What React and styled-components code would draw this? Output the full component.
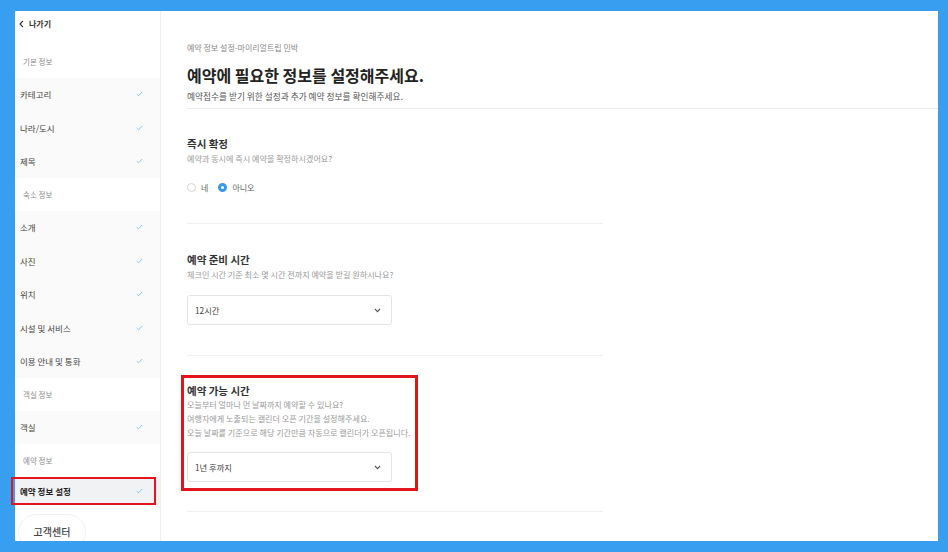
import styled, { createGlobalStyle } from "styled-components";

const GlobalStyle = createGlobalStyle`
  html, body {
    margin: 0;
    padding: 0;
    background: #389ef0;
  }
  body {
    font-family: "Noto Sans CJK KR", "Noto Sans", sans-serif;
    color: #333;
  }
  * {
    box-sizing: border-box;
  }
`;

const Frame = styled.div`
  width: 948px;
  height: 552px;
  padding: 11px 10px 11px 15px;
  background: #389ef0;
`;

const Window = styled.div`
  display: flex;
  height: 530px;
  background: #fff;
`;

const Sidebar = styled.aside`
  width: 146px;
  flex-shrink: 0;
  border-right: 1px solid #efefef;
  display: flex;
  flex-direction: column;
`;

const BackRow = styled.div`
  height: 34px;
  padding: 6px 0 0 4px;
  display: flex;
  align-items: flex-start;
  gap: 5px;
  font-size: 8px;
  font-weight: 700;
  line-height: 14px;
  color: #333;

  svg {
    margin-top: 3px;
  }
`;

const GroupLabel = styled.div`
  height: 32.5px;
  padding-left: 8px;
  display: flex;
  align-items: center;
  font-size: 7.5px;
  color: #8c8c8c;
`;

const Group = styled.div`
  background: #fafafa;
`;

const Item = styled.div`
  position: relative;
  height: ${(p) => (p.$active ? "28px" : "33.5px")};
  padding: 0 17px 0 5px;
  display: flex;
  align-items: center;
  justify-content: space-between;
  font-size: 8.5px;
  font-weight: ${(p) => (p.$active ? 700 : 400)};
  color: ${(p) => (p.$active ? "#222" : "#444")};
  background: ${(p) => (p.$active ? "#f1f2f4" : "transparent")};

  ${(p) =>
    p.$active &&
    `
    &::after {
      content: "";
      position: absolute;
      left: -4px;
      right: 4px;
      top: 0;
      bottom: 0;
      border: 2.5px solid #e3141b;
    }
  `}
`;

const HelpSlot = styled.div`
  flex: 1;
  overflow: hidden;
  padding: 9px 0 0 3px;
`;

const HelpButton = styled.div`
  width: 68px;
  height: 36px;
  border: 1px solid #f0f0f0;
  border-radius: 18px;
  display: flex;
  align-items: center;
  justify-content: center;
  font-size: 10px;
  font-weight: 500;
  color: #444;
`;

const Main = styled.main`
  flex: 1;
  padding: 31px 0 0 26px;
`;

const Header = styled.header`
  padding-bottom: 5px;
  border-bottom: 1px solid #ececec;
`;

const Breadcrumb = styled.div`
  font-size: 8px;
  line-height: 12px;
  color: #888;
`;

const Title = styled.h1`
  margin: 10px 0 0;
  font-size: 16px;
  line-height: 22px;
  font-weight: 700;
  color: #222;
`;

const Subtitle = styled.p`
  margin: 5px 0 0;
  font-size: 8.7px;
  line-height: 12px;
  color: #555;
`;

const Section = styled.section`
  width: 416px;
  padding: ${(p) => p.$pad || "28px 0 30px"};
  border-bottom: 1px solid #f0f0f0;
`;

const Highlight = styled.div`
  width: 237px;
  margin-left: -6px;
  padding: 6px 3px;
  border: 3px solid #e3141b;
`;

const SectionTitle = styled.h2`
  margin: 0;
  font-size: 10.5px;
  line-height: 14px;
  font-weight: 700;
  color: #333;
`;

const Desc = styled.p`
  margin: ${(p) => p.$mt || "2px"} 0 0;
  font-size: 8.1px;
  line-height: ${(p) => p.$lh || "12px"};
  color: #9a9a9a;
  white-space: nowrap;
`;

const RadioRow = styled.div`
  margin-top: 16px;
  display: flex;
  align-items: center;
  height: 12px;
`;

const RadioOption = styled.label`
  display: flex;
  align-items: center;
  gap: 5px;
  margin-right: 10px;
  font-size: 8px;
  color: #666;
`;

const RadioDot = styled.span`
  width: 9px;
  height: 9px;
  border-radius: 50%;
  border: ${(p) => (p.$checked ? "3px solid #3a98e8" : "1px solid #d6d6d6")};
  background: #fff;
`;

const Select = styled.div`
  margin-top: ${(p) => p.$mt || "14px"};
  width: 205px;
  height: 30px;
  padding: 0 10px 0 7px;
  border: 1px solid #e4e4e4;
  border-radius: 3px;
  display: flex;
  align-items: center;
  justify-content: space-between;
  font-size: 8.3px;
  color: #444;
`;

const Check = () => (
  <svg width="7" height="6" viewBox="0 0 7 6">
    <polyline
      points="0.8,3.2 2.6,4.8 6.2,1"
      fill="none"
      stroke="#86c0f0"
      strokeWidth="1"
    />
  </svg>
);

const Chevron = () => (
  <svg width="7" height="5" viewBox="0 0 7 5">
    <polyline
      points="1,1 3.5,3.6 6,1"
      fill="none"
      stroke="#555"
      strokeWidth="1.1"
    />
  </svg>
);

const BackArrow = () => (
  <svg width="5" height="8" viewBox="0 0 5 8">
    <polyline
      points="4,0.8 1,4 4,7.2"
      fill="none"
      stroke="#333"
      strokeWidth="1.2"
    />
  </svg>
);

const menu = [
  { label: "기본 정보", items: ["카테고리", "나라/도시", "제목"] },
  {
    label: "숙소 정보",
    items: ["소개", "사진", "위치", "시설 및 서비스", "이용 안내 및 통화"],
  },
  { label: "객실 정보", items: ["객실"] },
];

const App = () => {
  return (
    <>
      <GlobalStyle />
      <Frame>
        <Window>
          <Sidebar>
            <BackRow>
              <BackArrow />
              나가기
            </BackRow>
            {menu.map((g) => (
              <div key={g.label}>
                <GroupLabel>{g.label}</GroupLabel>
                <Group>
                  {g.items.map((it) => (
                    <Item key={it}>
                      {it}
                      <Check />
                    </Item>
                  ))}
                </Group>
              </div>
            ))}
            <GroupLabel>예약 정보</GroupLabel>
            <Item $active>
              예약 정보 설정
              <Check />
            </Item>
            <HelpSlot>
              <HelpButton>고객센터</HelpButton>
            </HelpSlot>
          </Sidebar>

          <Main>
            <Header>
              <Breadcrumb>예약 정보 설정-마이리얼트립 민박</Breadcrumb>
              <Title>예약에 필요한 정보를 설정해주세요.</Title>
              <Subtitle>
                예약접수를 받기 위한 설정과 추가 예약 정보를 확인해주세요.
              </Subtitle>
            </Header>

            <Section>
              <SectionTitle>즉시 확정</SectionTitle>
              <Desc>예약과 동시에 즉시 예약을 확정하시겠어요?</Desc>
              <RadioRow>
                <RadioOption>
                  <RadioDot />네
                </RadioOption>
                <RadioOption>
                  <RadioDot $checked />
                  아니오
                </RadioOption>
              </RadioRow>
            </Section>

            <Section $pad="29px 0 30px">
              <SectionTitle>예약 준비 시간</SectionTitle>
              <Desc>
                체크인 시간 기준 최소 몇 시간 전까지 예약을 받길 원하시나요?
              </Desc>
              <Select>
                12시간
                <Chevron />
              </Select>
            </Section>

            <Section $pad="19px 0 20px">
              <Highlight>
                <SectionTitle>예약 가능 시간</SectionTitle>
                <Desc $mt="0" $lh="14px">
                  오늘부터 얼마나 먼 날짜까지 예약할 수 있나요?
                  <br />
                  여행자에게 노출되는 캘린더 오픈 기간을 설정해주세요.
                  <br />
                  오늘 날짜를 기준으로 해당 기간만큼 자동으로 캘린더가 오픈됩니다.
                </Desc>
                <Select $mt="12px">
                  1년 후까지
                  <Chevron />
                </Select>
              </Highlight>
            </Section>
          </Main>
        </Window>
      </Frame>
    </>
  );
};

export default App;
